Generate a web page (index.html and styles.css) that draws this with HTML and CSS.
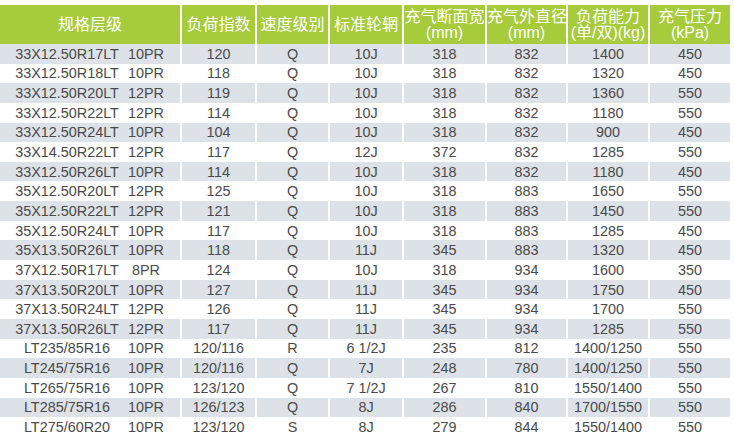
FILE: index.html
```html
<!DOCTYPE html>
<html>
<head>
<meta charset="utf-8">
<link rel="stylesheet" href="styles.css">
</head>
<body>
<table class="spec">
  <colgroup>
    <col class="c1"><col class="c2"><col class="c3"><col class="c4"><col class="c5"><col class="c6"><col class="c7"><col class="c8">
  </colgroup>
  <thead>
    <tr>
      <th>规格层级</th>
      <th>负荷指数</th>
      <th>速度级别</th>
      <th>标准轮辋</th>
      <th>充气断面宽<br>(mm)</th>
      <th>充气外直径<br>(mm)</th>
      <th>负荷能力<br>(单/双)(kg)</th>
      <th>充气压力<br>(kPa)</th>
    </tr>
  </thead>
  <tbody>
    <tr><td class="size"><span class="sz">33X12.50R17LT</span><span class="pr">10PR</span></td><td>120</td><td>Q</td><td>10J</td><td>318</td><td>832</td><td>1400</td><td>450</td></tr>
    <tr><td class="size"><span class="sz">33X12.50R18LT</span><span class="pr">10PR</span></td><td>118</td><td>Q</td><td>10J</td><td>318</td><td>832</td><td>1320</td><td>450</td></tr>
    <tr><td class="size"><span class="sz">33X12.50R20LT</span><span class="pr">12PR</span></td><td>119</td><td>Q</td><td>10J</td><td>318</td><td>832</td><td>1360</td><td>550</td></tr>
    <tr><td class="size"><span class="sz">33X12.50R22LT</span><span class="pr">12PR</span></td><td>114</td><td>Q</td><td>10J</td><td>318</td><td>832</td><td>1180</td><td>550</td></tr>
    <tr><td class="size"><span class="sz">33X12.50R24LT</span><span class="pr">10PR</span></td><td>104</td><td>Q</td><td>10J</td><td>318</td><td>832</td><td>900</td><td>450</td></tr>
    <tr><td class="size"><span class="sz">33X14.50R22LT</span><span class="pr">12PR</span></td><td>117</td><td>Q</td><td>12J</td><td>372</td><td>832</td><td>1285</td><td>550</td></tr>
    <tr><td class="size"><span class="sz">33X12.50R26LT</span><span class="pr">10PR</span></td><td>114</td><td>Q</td><td>10J</td><td>318</td><td>832</td><td>1180</td><td>450</td></tr>
    <tr><td class="size"><span class="sz">35X12.50R20LT</span><span class="pr">12PR</span></td><td>125</td><td>Q</td><td>10J</td><td>318</td><td>883</td><td>1650</td><td>550</td></tr>
    <tr><td class="size"><span class="sz">35X12.50R22LT</span><span class="pr">12PR</span></td><td>121</td><td>Q</td><td>10J</td><td>318</td><td>883</td><td>1450</td><td>550</td></tr>
    <tr><td class="size"><span class="sz">35X12.50R24LT</span><span class="pr">10PR</span></td><td>117</td><td>Q</td><td>10J</td><td>318</td><td>883</td><td>1285</td><td>450</td></tr>
    <tr><td class="size"><span class="sz">35X13.50R26LT</span><span class="pr">10PR</span></td><td>118</td><td>Q</td><td>11J</td><td>345</td><td>883</td><td>1320</td><td>450</td></tr>
    <tr><td class="size"><span class="sz">37X12.50R17LT</span><span class="pr">8PR</span></td><td>124</td><td>Q</td><td>10J</td><td>318</td><td>934</td><td>1600</td><td>350</td></tr>
    <tr><td class="size"><span class="sz">37X13.50R20LT</span><span class="pr">10PR</span></td><td>127</td><td>Q</td><td>11J</td><td>345</td><td>934</td><td>1750</td><td>450</td></tr>
    <tr><td class="size"><span class="sz">37X13.50R24LT</span><span class="pr">12PR</span></td><td>126</td><td>Q</td><td>11J</td><td>345</td><td>934</td><td>1700</td><td>550</td></tr>
    <tr><td class="size"><span class="sz">37X13.50R26LT</span><span class="pr">12PR</span></td><td>117</td><td>Q</td><td>11J</td><td>345</td><td>934</td><td>1285</td><td>550</td></tr>
    <tr><td class="size"><span class="sz">LT235/85R16</span><span class="pr">10PR</span></td><td>120/116</td><td>R</td><td>6 1/2J</td><td>235</td><td>812</td><td>1400/1250</td><td>550</td></tr>
    <tr><td class="size"><span class="sz">LT245/75R16</span><span class="pr">10PR</span></td><td>120/116</td><td>Q</td><td>7J</td><td>248</td><td>780</td><td>1400/1250</td><td>550</td></tr>
    <tr><td class="size"><span class="sz">LT265/75R16</span><span class="pr">10PR</span></td><td>123/120</td><td>Q</td><td>7 1/2J</td><td>267</td><td>810</td><td>1550/1400</td><td>550</td></tr>
    <tr><td class="size"><span class="sz">LT285/75R16</span><span class="pr">10PR</span></td><td>126/123</td><td>Q</td><td>8J</td><td>286</td><td>840</td><td>1700/1550</td><td>550</td></tr>
    <tr><td class="size"><span class="sz">LT275/60R20</span><span class="pr">10PR</span></td><td>123/120</td><td>S</td><td>8J</td><td>279</td><td>844</td><td>1550/1400</td><td>550</td></tr>
  </tbody>
</table>
</body>
</html>
```

FILE: styles.css
```css
html, body {
  margin: 0;
  padding: 0;
  background: #ffffff;
}
body {
  padding-top: 5px;
  overflow: hidden;
}
.spec {
  border-collapse: separate;
  border-spacing: 2px 0;
  margin-left: -2px;
  table-layout: fixed;
  width: 734px;
  font-family: "Liberation Sans", Arial, "Noto Sans CJK SC", sans-serif;
  color: #4a4a4a;
}
.c1 { width: 180px; }
.c2 { width: 73px; }
.c3 { width: 71px; }
.c4 { width: 72px; }
.c5 { width: 81px; }
.c6 { width: 79px; }
.c7 { width: 80px; }
.c8 { width: 80px; }
.spec th {
  background: #a6cb3b;
  color: #ffffff;
  font-weight: normal;
  font-size: 16px;
  line-height: 16px;
  height: 39px;
  padding: 0;
  text-align: center;
  vertical-align: middle;
  white-space: nowrap;
  overflow: visible;
  font-family: "Liberation Sans", Arial, "Noto Sans CJK SC", sans-serif;
}
.spec td {
  height: 19.65px;
  padding: 0;
  font-size: 14.4px;
  line-height: 16px;
  text-align: center;
  vertical-align: middle;
  white-space: nowrap;
}
.spec tbody tr:nth-child(odd) td {
  background: #dde2e8;
}
.spec td.size {
  text-align: left;
}
.sz {
  display: inline-block;
  width: 134px;
  text-align: center;
}
.pr {
  display: inline-block;
  width: 32px;
  margin-left: -6px;
  text-align: right;
}
```
